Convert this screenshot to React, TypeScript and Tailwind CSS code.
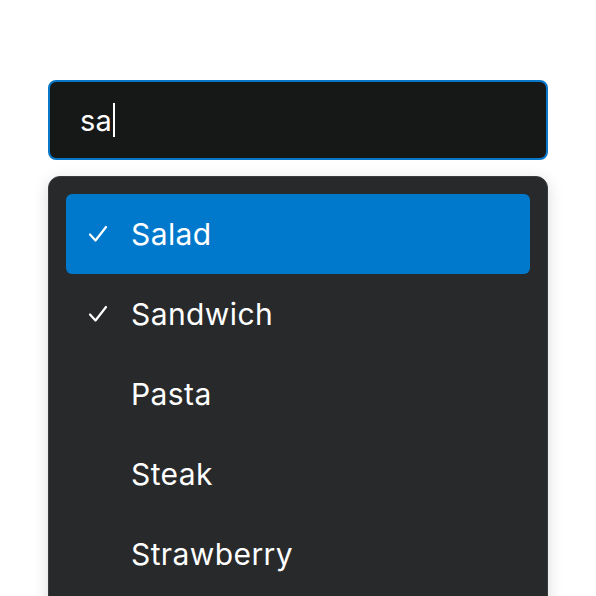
const items = [
  { label: "Salad", checked: true, active: true },
  { label: "Sandwich", checked: true, active: false },
  { label: "Pasta", checked: false, active: false },
  { label: "Steak", checked: false, active: false },
  { label: "Strawberry", checked: false, active: false },
];

function Check() {
  return (
    <svg width="20" height="18" viewBox="0 0 20 18" fill="none">
      <path d="M2 9.5 L7.5 15.5 L18 2" stroke="white" strokeWidth="2.2" strokeLinecap="round" strokeLinejoin="round" />
    </svg>
  );
}

export default function App() {
  return (
    <div className="h-[596px] overflow-hidden bg-white px-12 pt-20 font-['Inter',sans-serif] text-white">
      <div className="flex h-20 items-center rounded-lg border-2 border-[#0a78c8] bg-[#161717] px-[30px]">
        <span className="text-[29px] leading-none tracking-[0.2px]">sa</span>
        <span className="ml-[1px] h-[34px] w-[2px] bg-white"></span>
      </div>

      <div className="mt-4 rounded-xl border border-[#3a3b3e] bg-[#28292b] p-[17px] pb-6 shadow-[0_4px_16px_rgba(0,0,0,0.15)]">
        {items.map((item, i) => (
          <div
            key={i}
            className={
              "flex h-20 items-center rounded-md pl-[22px] " +
              (item.active ? "bg-[#0079cc]" : "")
            }
          >
            <div className="flex w-[43px] items-center">{item.checked && <Check />}</div>
            <span className="text-[30px] leading-none tracking-[0.4px]">{item.label}</span>
          </div>
        ))}
      </div>
    </div>
  );
}
